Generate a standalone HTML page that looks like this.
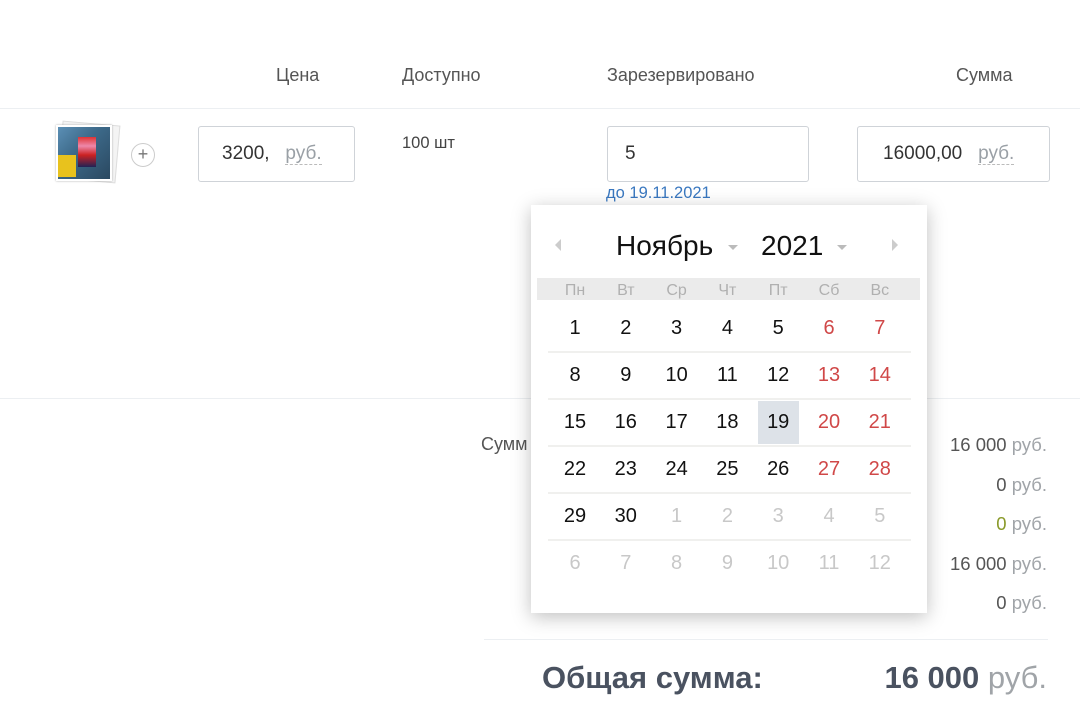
<!DOCTYPE html>
<html><head><meta charset="utf-8"><style>
*{margin:0;padding:0;box-sizing:border-box}
body{width:1080px;height:720px;background:#fff;font-family:"Liberation Sans","Noto Sans CJK SC",sans-serif;position:relative;overflow:hidden;color:#333}
.a{position:absolute;white-space:nowrap}
.h{font-size:18px;color:#555;top:65px}
.line{position:absolute;height:1px;background:#eceff2}
.box{position:absolute;border:1px solid #cfd3d8;border-radius:3px;background:#fff;font-size:19px;color:#333}
.rub{color:#9aa0a6;border-bottom:1px dashed #bbb}
.g{color:#a0a4a8}
.tot{right:33px;font-size:18.5px;color:#555}
#cal{position:absolute;left:531px;top:205px;width:396px;height:408px;background:#fff;box-shadow:0 4px 18px rgba(0,0,0,.25)}
.d{position:absolute;width:42px;text-align:center;font-size:20px;color:#111}
.wd{position:absolute;width:42px;text-align:center;font-size:16px;color:#b0b0b0;top:77px}
.w{color:#d04848}.o{color:#c8c8c8}
.sep{position:absolute;left:17px;width:363px;height:2px;background:#f0f0ee}
</style></head><body>
<div class="a h" style="left:276px">Цена</div>
<div class="a h" style="left:402px">Доступно</div>
<div class="a h" style="left:607px">Зарезервировано</div>
<div class="a h" style="left:956px">Сумма</div>
<div class="line" style="left:0;top:108px;width:1080px"></div>
<div class="line" style="left:0;top:398px;width:1080px"></div>

<div class="a" style="left:60px;top:123px;width:58px;height:58px;background:#f4f4f4;border:1px solid #ddd;transform:rotate(5deg)"></div>
<div class="a" style="left:56px;top:125px;width:56px;height:56px;border:2px solid #fff;box-shadow:0 0 2px #aaa;background:linear-gradient(135deg,#5b8fb5 0%,#3d6a8a 40%,#2a4860 100%)">
<div style="position:absolute;left:0;top:28px;width:18px;height:22px;background:#e8c21d"></div>
<div style="position:absolute;left:20px;top:10px;width:18px;height:30px;background:linear-gradient(#d33 0,#e8a 30%,#c22 60%,#225 100%)"></div>
</div>
<div class="a" style="left:131px;top:143px;width:24px;height:24px;border:1px solid #ccc;border-radius:50%;text-align:center;line-height:21px;font-size:18px;color:#777">+</div>

<div class="box" style="left:198px;top:126px;width:157px;height:56px;padding:16px 0 0 23px">3200, &nbsp;&nbsp;<span class="rub">руб.</span></div>
<div class="a" style="left:402px;top:134px;font-size:16.5px;color:#444">100 шт</div>
<div class="box" style="left:607px;top:126px;width:202px;height:56px;padding:16px 0 0 17px">5</div>
<div class="a" style="left:606px;top:184px;font-size:16.5px;color:#3a78c0">до 19.11.2021</div>
<div class="box" style="left:857px;top:126px;width:193px;height:56px;padding:16px 0 0 25px">16000,00 &nbsp;&nbsp;<span class="rub">руб.</span></div>

<div class="a" style="left:481px;top:434px;font-size:18px;color:#555">Сумм</div>
<div class="a tot" style="top:434px">16 000 <span class="g">руб.</span></div>
<div class="a tot" style="top:474px">0 <span class="g">руб.</span></div>
<div class="a tot" style="top:513px"><span style="color:#8a9a2a">0</span> <span class="g">руб.</span></div>
<div class="a tot" style="top:553px">16 000 <span class="g">руб.</span></div>
<div class="a tot" style="top:592px">0 <span class="g">руб.</span></div>
<div class="line" style="left:484px;top:639px;width:564px"></div>
<div class="a" style="left:542px;top:660px;font-size:31px;font-weight:bold;color:#4a5260">Общая сумма:</div>
<div class="a" style="right:33px;top:660px;font-size:31px;font-weight:bold;color:#4a5260">16 000 <span style="color:#a0a4a8;font-weight:normal">руб.</span></div>

<div id="cal">
<div class="a" style="left:24px;top:34px;width:0;height:0;border-top:6px solid transparent;border-bottom:6px solid transparent;border-right:6px solid #ccc"></div>
<div class="a" style="left:361px;top:34px;width:0;height:0;border-top:6px solid transparent;border-bottom:6px solid transparent;border-left:6px solid #ccc"></div>
<div class="a" style="left:85px;top:25px;font-size:28px;color:#111">Ноябрь</div>
<div class="a" style="left:197px;top:40px;border-left:5px solid transparent;border-right:5px solid transparent;border-top:5px solid #bbb"></div>
<div class="a" style="left:230px;top:25px;font-size:28px;color:#111">2021</div>
<div class="a" style="left:306px;top:40px;border-left:5px solid transparent;border-right:5px solid transparent;border-top:5px solid #bbb"></div>
<div class="a" style="left:6px;top:73px;width:383px;height:22px;background:#ebebeb"></div>
<div class="a" style="left:227px;top:196px;width:41px;height:43px;background:#dde2e8"></div>
<div id="days"></div>
</div>
<script>
var rows=[["1","2","3","4","5","6","7"],["8","9","10","11","12","13","14"],["15","16","17","18","19","20","21"],["22","23","24","25","26","27","28"],["29","30","1","2","3","4","5"],["6","7","8","9","10","11","12"]];
var wd=["Пн","Вт","Ср","Чт","Пт","Сб","Вс"];
var c=document.getElementById('cal'),h='';
for(var i=0;i<7;i++)h+='<div class="wd" style="left:'+(23+i*50.8)+'px">'+wd[i]+'</div>';
for(var r=0;r<6;r++){for(var i=0;i<7;i++){var cls='d';if(r==4&&i>1||r==5)cls+=' o';else if(i>4)cls+=' w';
h+='<div class="'+cls+'" style="left:'+(23+i*50.8)+'px;top:'+(112+r*47)+'px">'+rows[r][i]+'</div>';}
if(r<5)h+='<div class="sep" style="top:'+(146+r*47)+'px"></div>';}
c.insertAdjacentHTML('beforeend',h);
</script>
</body></html>
